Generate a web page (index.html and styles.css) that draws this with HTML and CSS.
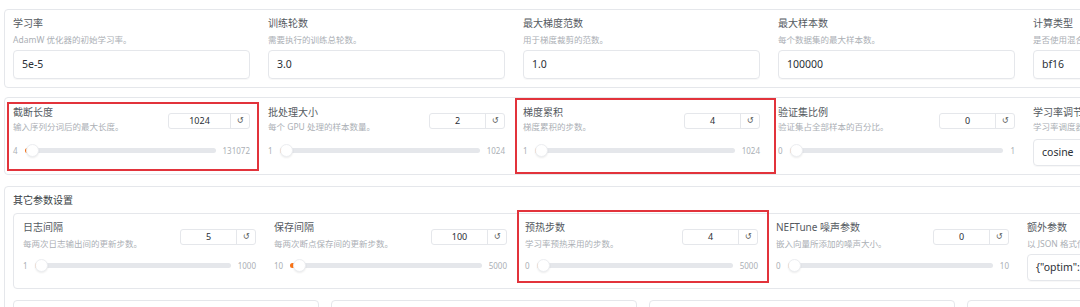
FILE: index.html
```html
<!DOCTYPE html>
<html lang="zh-CN">
<head>
  <meta charset="UTF-8" />
  <title>训练参数</title>
  <link rel="stylesheet" href="styles.css">
</head>
<body>
  <div class="page">

    <!-- Première ligne : champs texte -->
    <div class="row">
      <div class="field">
        <div class="label">学习率</div>
        <div class="info">AdamW 优化器的初始学习率。</div>
        <div class="textbox">5e-5</div>
      </div>
      <div class="field">
        <div class="label">训练轮数</div>
        <div class="info">需要执行的训练总轮数。</div>
        <div class="textbox">3.0</div>
      </div>
      <div class="field">
        <div class="label">最大梯度范数</div>
        <div class="info">用于梯度裁剪的范数。</div>
        <div class="textbox">1.0</div>
      </div>
      <div class="field">
        <div class="label">最大样本数</div>
        <div class="info">每个数据集的最大样本数。</div>
        <div class="textbox">100000</div>
      </div>
      <div class="field">
        <div class="label">计算类型</div>
        <div class="info">是否使用混合精度训练。</div>
        <div class="textbox">bf16</div>
      </div>
    </div>

    <!-- Deuxième ligne : curseurs -->
    <div class="row row-sliders">
      <div class="field slider-field mark mark-cutoff">
        <div class="slider-head">
          <div>
            <div class="label">截断长度</div>
            <div class="info">输入序列分词后的最大长度。</div>
          </div>
          <div class="num num-wide"><span class="num-value">1024</span><span class="num-reset">↺</span></div>
        </div>
        <div class="slider">
          <span class="range-end">4</span>
          <div class="track" style="--v:0.0078"><div class="fill"></div><div class="thumb"></div></div>
          <span class="range-end">131072</span>
        </div>
      </div>
      <div class="field slider-field">
        <div class="slider-head">
          <div>
            <div class="label">批处理大小</div>
            <div class="info">每个 GPU 处理的样本数量。</div>
          </div>
          <div class="num"><span class="num-value">2</span><span class="num-reset">↺</span></div>
        </div>
        <div class="slider">
          <span class="range-end">1</span>
          <div class="track" style="--v:0.001"><div class="fill"></div><div class="thumb"></div></div>
          <span class="range-end">1024</span>
        </div>
      </div>
      <div class="field slider-field mark mark-accum">
        <div class="slider-head">
          <div>
            <div class="label">梯度累积</div>
            <div class="info">梯度累积的步数。</div>
          </div>
          <div class="num"><span class="num-value">4</span><span class="num-reset">↺</span></div>
        </div>
        <div class="slider">
          <span class="range-end">1</span>
          <div class="track" style="--v:0.003"><div class="fill"></div><div class="thumb"></div></div>
          <span class="range-end">1024</span>
        </div>
      </div>
      <div class="field slider-field">
        <div class="slider-head">
          <div>
            <div class="label">验证集比例</div>
            <div class="info">验证集占全部样本的百分比。</div>
          </div>
          <div class="num"><span class="num-value">0</span><span class="num-reset">↺</span></div>
        </div>
        <div class="slider">
          <span class="range-end">0</span>
          <div class="track" style="--v:0"><div class="fill"></div><div class="thumb"></div></div>
          <span class="range-end">1</span>
        </div>
      </div>
      <div class="field field-select">
        <div class="label">学习率调节器</div>
        <div class="info">学习率调度器的名称。</div>
        <div class="textbox textbox-short">cosine</div>
      </div>
    </div>

    <!-- Bloc repliable : autres paramètres -->
    <div class="accordion">
      <div class="accordion-title">其它参数设置</div>
      <div class="row row-inner">
        <div class="field slider-field">
          <div class="slider-head">
            <div>
              <div class="label">日志间隔</div>
              <div class="info">每两次日志输出间的更新步数。</div>
            </div>
            <div class="num"><span class="num-value">5</span><span class="num-reset">↺</span></div>
          </div>
          <div class="slider">
            <span class="range-end">1</span>
            <div class="track" style="--v:0.004"><div class="fill"></div><div class="thumb"></div></div>
            <span class="range-end">1000</span>
          </div>
        </div>
        <div class="field slider-field">
          <div class="slider-head">
            <div>
              <div class="label">保存间隔</div>
              <div class="info">每两次断点保存间的更新步数。</div>
            </div>
            <div class="num"><span class="num-value">100</span><span class="num-reset">↺</span></div>
          </div>
          <div class="slider">
            <span class="range-end">10</span>
            <div class="track" style="--v:0.018"><div class="fill"></div><div class="thumb"></div></div>
            <span class="range-end">5000</span>
          </div>
        </div>
        <div class="field slider-field mark mark-warmup">
          <div class="slider-head">
            <div>
              <div class="label">预热步数</div>
              <div class="info">学习率预热采用的步数。</div>
            </div>
            <div class="num"><span class="num-value">4</span><span class="num-reset">↺</span></div>
          </div>
          <div class="slider">
            <span class="range-end">0</span>
            <div class="track" style="--v:0.0008"><div class="fill"></div><div class="thumb"></div></div>
            <span class="range-end">5000</span>
          </div>
        </div>
        <div class="field slider-field">
          <div class="slider-head">
            <div>
              <div class="label">NEFTune 噪声参数</div>
              <div class="info">嵌入向量所添加的噪声大小。</div>
            </div>
            <div class="num"><span class="num-value">0</span><span class="num-reset">↺</span></div>
          </div>
          <div class="slider">
            <span class="range-end">0</span>
            <div class="track" style="--v:0"><div class="fill"></div><div class="thumb"></div></div>
            <span class="range-end">10</span>
          </div>
        </div>
        <div class="field field-text">
          <div class="label">额外参数</div>
          <div class="info">以 JSON 格式传递给训练器的额外参数。</div>
          <div class="textbox textbox-short">{"optim": "adamw_torch"}</div>
        </div>
      </div>

      <div class="box-row">
        <div class="box"></div>
        <div class="box"></div>
        <div class="box"></div>
        <div class="box"></div>
      </div>
    </div>

  </div>
</body>
</html>
```

FILE: styles.css
```css
:root {
  --border: #e5e7eb;
  --label: #555a61;
  --info: #abafb5;
  --text: #2b2f36;
  --accent: #f97316;
  --mark: #e2333b;
}

body {
  margin: 0;
  background: #fff;
  font-family: "Noto Sans", "Noto Sans CJK SC", sans-serif;
  color: var(--text);
  overflow: hidden;
}

.page {
  padding: 9px 0 0 4px;
  width: 1400px;
}

/* Rangée de champs */
.row {
  display: flex;
  align-items: flex-start;
  width: max-content;
  border: 1px solid var(--border);
  border-radius: 4px;
  background: #fff;
}

.field {
  width: 237px;
  padding: 6px 10px 8px 8px;
  position: relative;
}

.label {
  font-size: 10px;
  line-height: 14px;
  color: var(--label);
  white-space: nowrap;
}

.info {
  margin-top: 4px;
  font-size: 8.5px;
  line-height: 12px;
  color: var(--info);
  white-space: nowrap;
}

.textbox {
  margin-top: 4px;
  height: 27px;
  border: 1px solid var(--border);
  border-radius: 4px;
  padding-left: 8px;
  font-size: 10.5px;
  line-height: 27px;
  color: var(--text);
  white-space: nowrap;
  overflow: hidden;
  box-shadow: 0 1px 1px rgba(0,0,0,0.03);
}

/* Champs à curseur */
.row-sliders {
  margin-top: 9px;
}

.slider-field {
  padding: 7px 10px 16px 8px;
}

.field-select {
  padding-top: 7px;
}

.slider-head {
  display: flex;
  justify-content: space-between;
  align-items: flex-start;
}

.slider-head .info {
  margin-top: 2px;
}

.num {
  margin-top: 8px;
  display: flex;
  width: 74px;
  height: 14px;
  border: 1px solid var(--border);
  border-radius: 3px;
  font-size: 9px;
  line-height: 14px;
}

.num-wide {
  width: 80px;
}

.num-value {
  flex: 1;
  text-align: center;
  color: var(--text);
}

.num-reset {
  width: 18px;
  border-left: 1px solid var(--border);
  text-align: center;
  font-family: "DejaVu Sans", sans-serif;
  font-size: 8px;
  color: #555;
}

.slider {
  margin-top: 11px;
  display: flex;
  align-items: center;
  gap: 7px;
  height: 12px;
}

.range-end {
  font-size: 8px;
  color: var(--info);
}

.track {
  flex: 1;
  height: 5px;
  border-radius: 3px;
  background: var(--border);
  position: relative;
}

.fill {
  position: absolute;
  left: 0;
  top: 0;
  bottom: 0;
  width: calc((100% - 12px) * var(--v) + 6px);
  background: var(--accent);
  border-radius: 3px 0 0 3px;
}

.thumb {
  position: absolute;
  top: -4px;
  left: calc((100% - 12px) * var(--v));
  width: 11px;
  height: 11px;
  border-radius: 50%;
  background: #fff;
  border: 1px solid #eceef1;
  box-shadow: 0 1px 2px rgba(0,0,0,0.08);
}

.field-select .info {
  margin-top: 2px;
}

.textbox-short {
  margin-top: 6px;
  height: 25px;
  line-height: 25px;
}

/* Bloc « autres paramètres » */
.accordion {
  margin-top: 11px;
  border: 1px solid var(--border);
  border-radius: 4px;
  padding: 6px 0 0 8px;
  width: max-content;
}

.accordion-title {
  font-size: 10px;
  line-height: 14px;
  color: #3a3f46;
}

.row-inner {
  margin-top: 6px;
}

.row-inner .field {
  width: 233px;
  padding: 6px 9px 17px 9px;
}

.row-inner .field-text {
  padding-bottom: 7px;
}

.row-inner .field-text .textbox {
  margin-top: 4px;
}

.row-inner .slider-head .info {
  margin-top: 4px;
}

.row-inner .num {
  margin-top: 9px;
}

.row-inner .slider {
  margin-top: 9px;
}

.box-row {
  margin-top: 11px;
  display: flex;
  gap: 12px;
}

.box {
  width: 304px;
  height: 40px;
  border: 1px solid var(--border);
  border-radius: 4px;
}

/* Cadres rouges d'annotation */
.mark::after {
  content: "";
  position: absolute;
  border: 2px solid var(--mark);
  pointer-events: none;
}

.mark-cutoff::after {
  top: 4px;
  right: 1px;
  bottom: 1px;
  left: 2px;
}

.mark-accum::after {
  top: 0;
  right: -6px;
  bottom: -2px;
  left: 0;
}

.mark-warmup::after {
  top: -4px;
  right: -2px;
  bottom: 5px;
  left: 1px;
}
```
